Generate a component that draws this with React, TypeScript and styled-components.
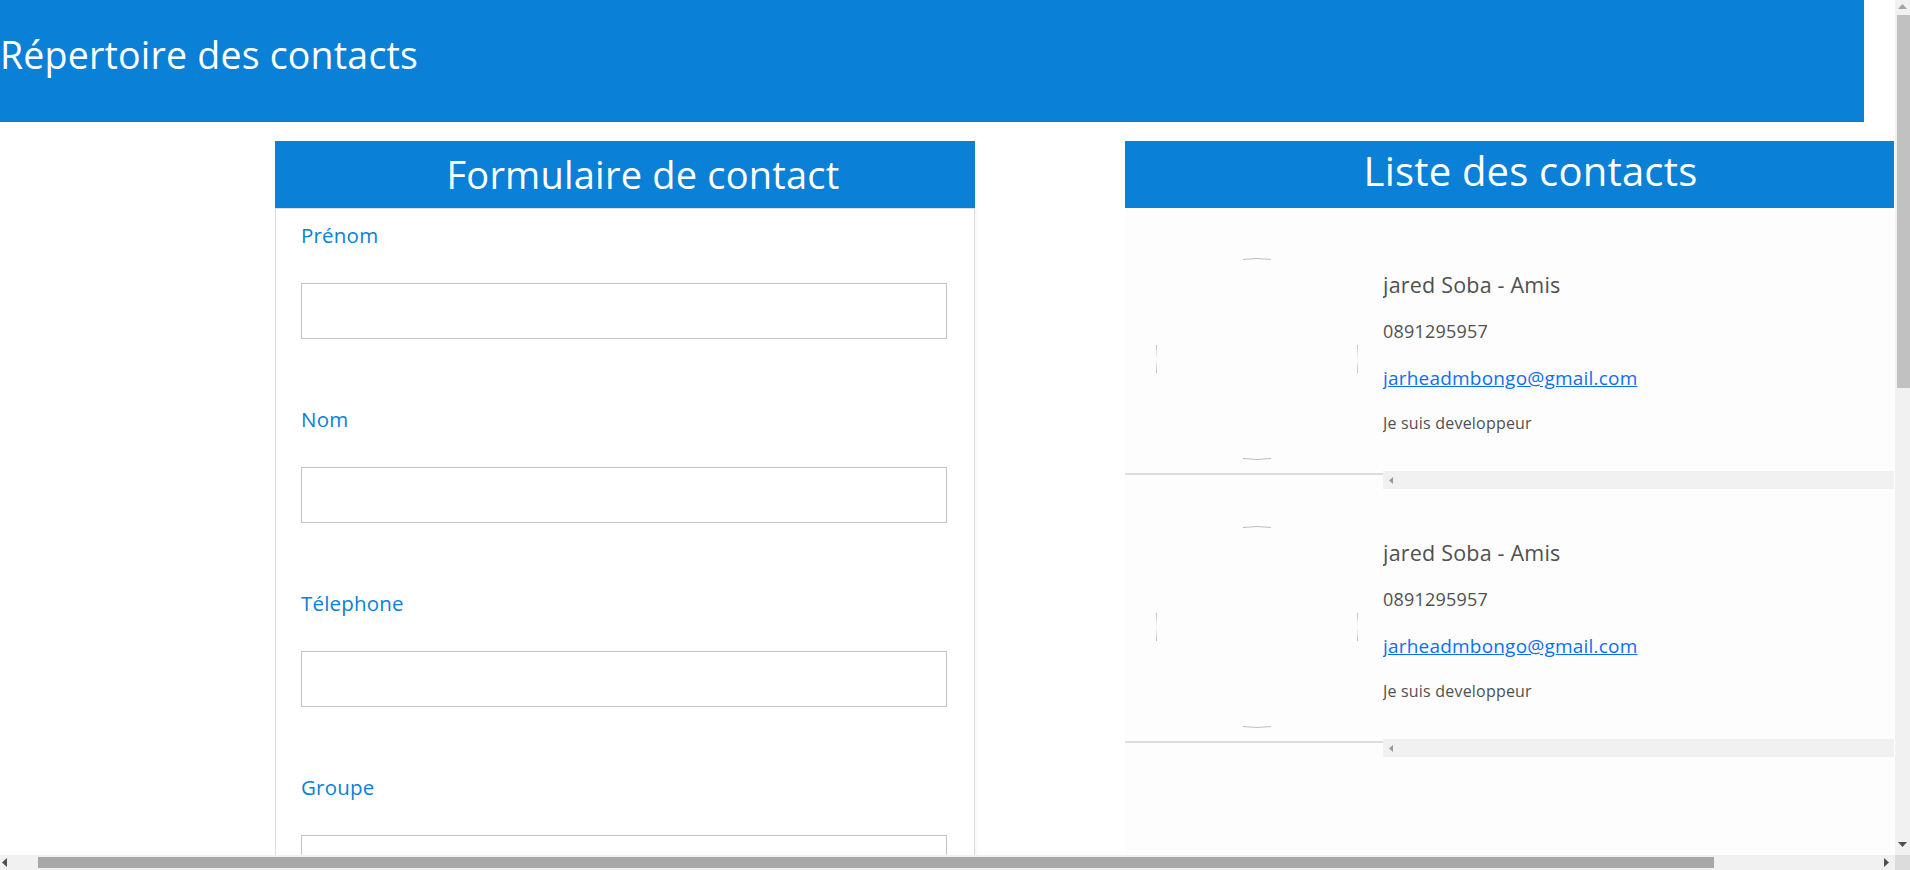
import React from "react";
import styled, { createGlobalStyle } from "styled-components";

// palette
const blue = "#0a80d7";
const ink = "#505050";
const track = "#f1f1f1";

const GlobalStyle = createGlobalStyle`
  html, body {
    margin: 0;
    padding: 0;
    background: #ffffff;
  }
  body {
    font-family: "Open Sans", "Noto Sans", sans-serif;
    letter-spacing: 0.2px;
  }
`;

const Page = styled.div`
  width: 2082px;
  min-height: 1890px;
`;

const TopBar = styled.header`
  width: 1864px;
  height: 122px;
  box-sizing: border-box;
  padding: 0 0 14px 0;
  display: flex;
  align-items: center;
  background: ${blue};
`;

const PageTitle = styled.h1`
  margin: 0;
  color: #fff;
  font-size: 37.5px;
  font-weight: 400;
  line-height: 1.2;
`;

const Columns = styled.main`
  display: flex;
  align-items: flex-start;
  gap: 150px;
  padding: 19px 0 60px 275px;
`;

const Card = styled.section<{ $width: number }>`
  width: ${(p) => p.$width}px;
  flex-shrink: 0;
`;

const CardHead = styled.div<{ $shift: number }>`
  height: 67px;
  box-sizing: border-box;
  padding-left: ${(p) => p.$shift}px;
  display: flex;
  align-items: center;
  justify-content: center;
  background: ${blue};
`;

const CardTitle = styled.h2<{ $size: number; $lift: number }>`
  margin: 0 0 ${(p) => p.$lift}px;
  color: #fff;
  font-size: ${(p) => p.$size}px;
  font-weight: 400;
  line-height: 1.2;
`;

const FormBody = styled.form`
  border: 1px solid #dedede;
  box-shadow: 1px 1px 3px rgba(0, 0, 0, 0.06);
  padding: 11px 0 40px 25px;
`;

const Field = styled.div`
  margin-bottom: 65px;
`;

const Label = styled.label`
  display: block;
  color: ${blue};
  font-size: 20.5px;
  line-height: 30px;
`;

const Input = styled.input`
  display: block;
  margin-top: 33px;
  width: 646px;
  height: 56px;
  box-sizing: border-box;
  border: 1px solid #c4c4c4;
  border-radius: 0;
  background: #fff;
  font: inherit;
`;

const Submit = styled.button`
  width: 646px;
  height: 50px;
  border: none;
  background: ${blue};
  color: #fff;
  font-size: 18px;
  font-family: inherit;
`;

const ListBody = styled.div`
  padding: 13px 0 300px;
  background: #fdfdfd;
`;

const ContactRow = styled.article`
  display: flex;
  height: 268px;
`;

const AvatarCol = styled.div`
  width: 258px;
  height: 254px;
  flex-shrink: 0;
  box-sizing: border-box;
  padding: 37px 0 13px 31px;
  border-bottom: 2px solid #dcdcdc;
`;

const Avatar = styled.svg`
  display: block;
  width: 202px;
  height: 202px;
`;

const InfoCol = styled.div`
  flex: 1;
  min-width: 0;
  display: flex;
  flex-direction: column;
  color: ${ink};
`;

const InfoText = styled.div`
  flex: 1;
  padding-top: 50px;
  white-space: nowrap;
  overflow: hidden;
`;

const Name = styled.p`
  margin: 0 0 19px;
  font-size: 21.5px;
  font-weight: 500;
  line-height: 28px;
`;

const Phone = styled.p`
  margin: 0 0 21px;
  font-size: 18px;
  line-height: 26px;
`;

const Mail = styled.a`
  display: inline-block;
  margin-bottom: 22px;
  color: #0d6efd;
  font-size: 19px;
  line-height: 26px;
  text-decoration: underline;
`;

const Bio = styled.p`
  margin: 0;
  font-size: 16px;
  line-height: 20px;
`;

// scroll track under each contact's text
const RowTrack = styled.div`
  height: 18px;
  flex-shrink: 0;
  display: flex;
  align-items: center;
  padding-left: 6px;
  background: ${track};
`;

// the window's own scrollbars, drawn over the page
const VBar = styled.div`
  position: fixed;
  top: 0;
  right: 0;
  width: 15px;
  height: 855px;
  background: ${track};
`;

const VThumb = styled.div`
  position: absolute;
  top: 15px;
  left: 2px;
  right: 0;
  height: 373px;
  background: #c1c1c1;
`;

const HBar = styled.div`
  position: fixed;
  left: 0;
  bottom: 0;
  width: 1895px;
  height: 15px;
  background: ${track};
`;

const HThumb = styled.div`
  position: absolute;
  left: 38px;
  top: 2px;
  width: 1676px;
  height: 11px;
  background: #a8a8a8;
`;

const Corner = styled.div`
  position: fixed;
  right: 0;
  bottom: 0;
  width: 15px;
  height: 15px;
  background: #dcdcdc;
`;

const Arrow = styled.svg<{ $x: number; $y: number }>`
  position: absolute;
  left: ${(p) => p.$x}px;
  top: ${(p) => p.$y}px;
`;

interface contact {
  prenom: string;
  nom: string;
  groupe: string;
  tel: string;
  email: string;
  bio: string;
}

const contacts: contact[] = [
  { prenom: "jared", nom: "Soba", groupe: "Amis", tel: "0891295957", email: "jarheadmbongo@gmail.com", bio: "Je suis developpeur" },
  { prenom: "jared", nom: "Soba", groupe: "Amis", tel: "0891295957", email: "jarheadmbongo@gmail.com", bio: "Je suis developpeur" },
];

const fields = ["Prénom", "Nom", "Télephone", "Groupe", "Email", "Bio"];

// broken avatar picture: only the edges of the round frame show
const AvatarFrame = () => (
  <Avatar viewBox="0 0 202 202">
    <g fill="none" stroke="#bdbdbd" strokeWidth="1">
      <path d="M87 1.5 A100.5 100.5 0 0 1 115 1.5" />
      <path d="M87 200.5 A100.5 100.5 0 0 0 115 200.5" />
      <path d="M0.5 87 A100.5 100.5 0 0 0 0.5 115" />
      <path d="M201.5 87 A100.5 100.5 0 0 1 201.5 115" />
    </g>
  </Avatar>
);

const LeftTick = () => (
  <svg width="4" height="7" viewBox="0 0 4 7">
    <path d="M4 0 L0 3.5 L4 7 Z" fill="#9a9a9a" />
  </svg>
);

const WindowScrollbars = () => (
  <>
    <VBar>
      <Arrow $x={3} $y={4} width="9" height="5" viewBox="0 0 9 5">
        <path d="M0 5 L4.5 0 L9 5 Z" fill="#a3a3a3" />
      </Arrow>
      <VThumb />
      <Arrow $x={3} $y={842} width="9" height="5" viewBox="0 0 9 5">
        <path d="M0 0 L4.5 5 L9 0 Z" fill="#505050" />
      </Arrow>
    </VBar>
    <HBar>
      <Arrow $x={2} $y={3} width="5" height="9" viewBox="0 0 5 9">
        <path d="M5 0 L0 4.5 L5 9 Z" fill="#505050" />
      </Arrow>
      <HThumb />
      <Arrow $x={1884} $y={3} width="5" height="9" viewBox="0 0 5 9">
        <path d="M0 0 L5 4.5 L0 9 Z" fill="#505050" />
      </Arrow>
    </HBar>
    <Corner />
  </>
);

const App = () => {
  return (
    <Page>
      <GlobalStyle />
      <TopBar>
        <PageTitle>Répertoire des contacts</PageTitle>
      </TopBar>
      <Columns>
        <Card $width={700}>
          <CardHead $shift={36}>
            <CardTitle $size={38} $lift={0}>Formulaire de contact</CardTitle>
          </CardHead>
          <FormBody onSubmit={(e) => e.preventDefault()}>
            {fields.map((f) => (
              <Field key={f}>
                <Label>{f}</Label>
                <Input type="text" />
              </Field>
            ))}
            <Submit type="submit">Créer</Submit>
          </FormBody>
        </Card>
        <Card $width={769}>
          <CardHead $shift={42}>
            <CardTitle $size={40} $lift={7}>Liste des contacts</CardTitle>
          </CardHead>
          <ListBody>
            {contacts.map((c, i) => (
              <ContactRow key={i}>
                <AvatarCol>
                  <AvatarFrame />
                </AvatarCol>
                <InfoCol>
                  <InfoText>
                    <Name>
                      {c.prenom} {c.nom} - {c.groupe}
                    </Name>
                    <Phone>{c.tel}</Phone>
                    <Mail href={`mailto:${c.email}`}>{c.email}</Mail>
                    <Bio>{c.bio}</Bio>
                  </InfoText>
                  <RowTrack>
                    <LeftTick />
                  </RowTrack>
                </InfoCol>
              </ContactRow>
            ))}
          </ListBody>
        </Card>
      </Columns>
      <WindowScrollbars />
    </Page>
  );
};

export default App;
